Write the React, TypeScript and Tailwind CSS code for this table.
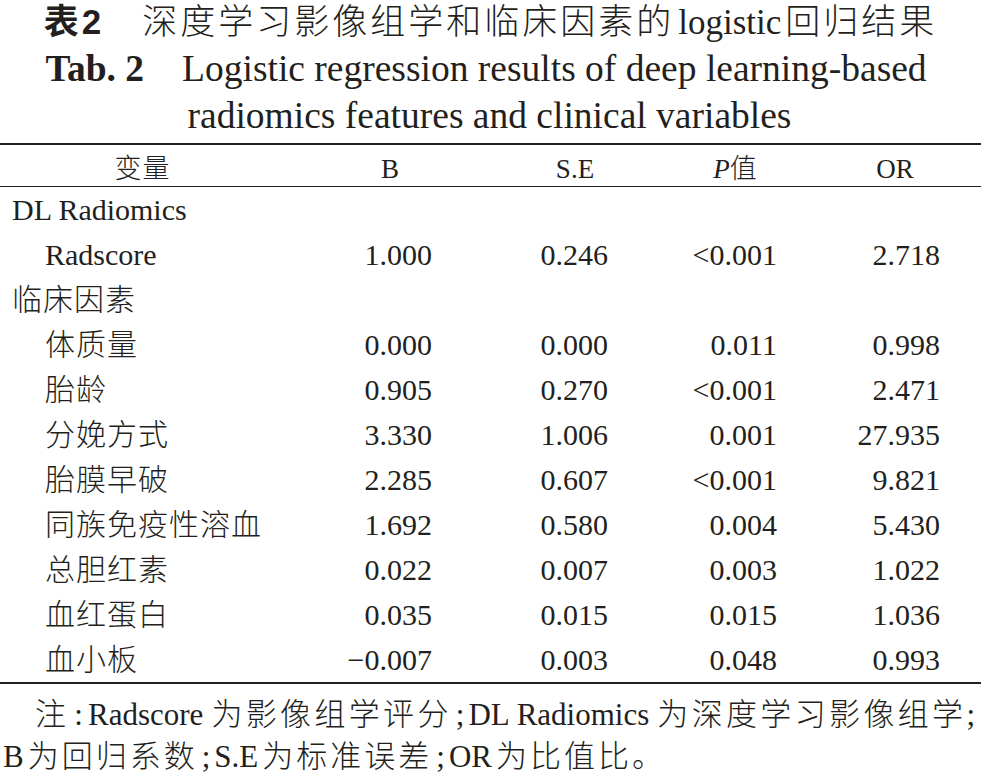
const ROWS: { label: string; indent: boolean; b?: string; se?: string; p?: string; or?: string }[] = [
  { label: "DL Radiomics", indent: false },
  { label: "Radscore", indent: true, b: "1.000", se: "0.246", p: "<0.001", or: "2.718" },
  { label: "临床因素", indent: false },
  { label: "体质量", indent: true, b: "0.000", se: "0.000", p: "0.011", or: "0.998" },
  { label: "胎龄", indent: true, b: "0.905", se: "0.270", p: "<0.001", or: "2.471" },
  { label: "分娩方式", indent: true, b: "3.330", se: "1.006", p: "0.001", or: "27.935" },
  { label: "胎膜早破", indent: true, b: "2.285", se: "0.607", p: "<0.001", or: "9.821" },
  { label: "同族免疫性溶血", indent: true, b: "1.692", se: "0.580", p: "0.004", or: "5.430" },
  { label: "总胆红素", indent: true, b: "0.022", se: "0.007", p: "0.003", or: "1.022" },
  { label: "血红蛋白", indent: true, b: "0.035", se: "0.015", p: "0.015", or: "1.036" },
  { label: "血小板", indent: true, b: "\u22120.007", se: "0.003", p: "0.048", or: "0.993" },
];

// Chinese run inside the note: a bit of tracking like the printed page
function Zh({ children }: { children: string }) {
  return <span className="tracking-[3px]">{children}</span>;
}

function Semi() {
  return <span className="mx-[4px]">;</span>;
}

export default function App() {
  return (
    <div className="w-[981px] h-[774px] overflow-hidden bg-white text-[#231f20] font-['Liberation_Serif','Noto_Sans_CJK_SC',serif]">
      {/* TITLE */}
      <div className="mt-[-2px] flex flex-col items-center">
        <div className="h-[47px] leading-[47px] text-[35px] whitespace-nowrap tracking-[3px]">
          <span className="font-['Liberation_Sans','Noto_Sans_CJK_SC',sans-serif] font-bold">表2</span>
          <span className="ml-[38px] font-light">深度学习影像组学和临床因素的</span>
          <span className="mx-[4px] tracking-normal">logistic</span>
          <span className="font-light">回归结果</span>
        </div>
        <div className="h-[47px] leading-[47px] text-[37.5px] whitespace-nowrap pr-[9px]">
          <span className="font-bold">Tab. 2</span>
          <span className="ml-[38px]">Logistic regression results of deep learning-based</span>
        </div>
        <div className="h-[47px] leading-[47px] text-[37.5px] whitespace-nowrap pr-[2px]">
          radiomics features and clinical variables
        </div>
      </div>

      {/* TABLE */}
      <div className="mt-[4px] border-t-2 border-[#231f20]">
        <div className="grid grid-cols-[285px_210px_160px_160px_160px] h-[42px] pt-[4px] items-center text-[27px] border-b border-[#231f20]">
          <div className="text-center font-light tracking-[1px]">变量</div>
          <div className="text-center">B</div>
          <div className="text-center">S.E</div>
          <div className="text-center">
            <span className="italic">P</span>
            <span className="font-light">值</span>
          </div>
          <div className="text-center">OR</div>
        </div>

        <div className="border-b-2 border-[#231f20]">
          {ROWS.map((row) => {
            const zh = /[\u4e00-\u9fa5]/.test(row.label);
            return (
              <div
                key={row.label}
                className="grid grid-cols-[300px_132px_176px_169px_163px] h-[45px] items-center text-[30px] whitespace-nowrap"
              >
                <div
                  className={`font-light ${row.indent ? "pl-[45px]" : "pl-[12px]"} ${zh ? "tracking-[1px]" : ""}`}
                >
                  {row.label}
                </div>
                <div className="text-right">{row.b}</div>
                <div className="text-right">{row.se}</div>
                <div className="text-right">{row.p}</div>
                <div className="text-right">{row.or}</div>
              </div>
            );
          })}
        </div>
      </div>

      {/* NOTE */}
      <div className="mt-[10px] text-[31px] leading-[42px] font-light">
        <div className="pl-[35px] pr-[6px] whitespace-nowrap text-justify [text-align-last:justify]">
          <Zh>注</Zh>
          <span className="mx-[5px]">:</span>
          Radscore <Zh>为影像组学评分</Zh>
          <Semi />
          DL Radiomics <Zh>为深度学习影像组学</Zh>;
        </div>
        <div className="pl-[3px] whitespace-nowrap">
          B<span className="ml-[4px]" />
          <Zh>为回归系数</Zh>
          <Semi />
          S.E<span className="ml-[4px]" />
          <Zh>为标准误差</Zh>
          <Semi />
          OR<span className="ml-[4px]" />
          <Zh>为比值比。</Zh>
        </div>
      </div>
    </div>
  );
}
